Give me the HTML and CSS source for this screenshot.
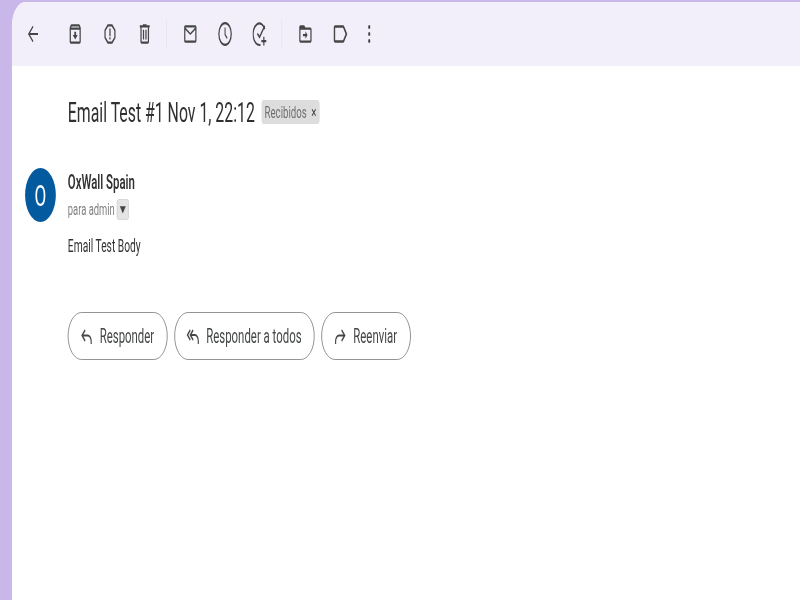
FILE: index.html
```html
<!DOCTYPE html>
<html lang="es">
<head>
<meta charset="utf-8">
<title>Email Test #1</title>
<link rel="stylesheet" href="styles.css">
</head>
<body>
<div class="viewport">
<div class="stage">
  <main class="panel">
    <header class="toolbar">
      <svg class="icon back" viewBox="0 0 24 24"><path d="M20 12H5M12 5l-7 7 7 7" class="line thin"/></svg>
      <div class="group first">
        <svg class="icon" viewBox="0 0 24 24"><path d="M20.54 5.23l-1.39-1.68C18.88 3.21 18.47 3 18 3H6c-.47 0-.88.21-1.16.55L3.46 5.23C3.17 5.57 3 6.02 3 6.5V19c0 1.1.9 2 2 2h14c1.1 0 2-.9 2-2V6.5c0-.48-.17-.93-.46-1.27zM6.24 5h11.52l.81.97H5.44l.8-.97zM5 19V8h14v11H5zm8.45-9h-2.9v3H8l4 4 4-4h-2.55z"/></svg>
        <svg class="icon" viewBox="0 0 24 24"><path d="M15.73 3H8.27L3 8.27v7.46L8.27 21h7.46L21 15.73V8.27L15.73 3zM19 14.9L14.9 19H9.1L5 14.9V9.1L9.1 5h5.8L19 9.1v5.8z"/><path d="M11 7h2v7h-2zM11 15h2v2h-2z"/></svg>
        <svg class="icon" viewBox="0 0 24 24"><path d="M15 4V3H9v1H4v2h1v13c0 1.1.9 2 2 2h10c1.1 0 2-.9 2-2V6h1V4h-5zm2 15H7V6h10v13z"/><path d="M9 8h2v9H9zm4 0h2v9h-2z"/></svg>
      </div>
      <span class="sep"></span>
      <div class="group">
        <svg class="icon" viewBox="0 0 24 24"><path d="M20 4H4c-1.1 0-2 .9-2 2v12c0 1.1.9 2 2 2h16c1.1 0 2-.9 2-2V6c0-1.1-.9-2-2-2zm0 14H4V8l8 5 8-5v10zm-8-7L4 6h16l-8 5z"/></svg>
        <svg class="icon" viewBox="0 0 24 24"><circle cx="12" cy="12" r="10" class="line"/><path d="M12 6V12.500l3.500 3.500" class="line thin"/></svg>
        <svg class="icon" viewBox="0 0 24 24"><path d="M20 7.500A10 10 0 1 0 13 22" class="line"/><path d="M8 11.500l3.500 3.500L20 4.500M14.500 18.500h8M18.500 14.500v8" class="line"/></svg>
      </div>
      <span class="sep"></span>
      <div class="group">
        <svg class="icon" viewBox="0 0 24 24"><path d="M20 6h-8l-2-2H4c-1.100 0-2 .9-2 2v12c0 1.100.9 2 2 2h16c1.100 0 2-.9 2-2V8c0-1.100-.9-2-2-2zm0 12H4V8h16v10z"/><path d="M12 9.500l3.500 3.500-3.500 3.500V14H8v-2h4z"/></svg>
        <svg class="icon large" viewBox="0 0 24 24"><path d="M17.63 5.84C17.27 5.33 16.67 5 16 5L5 5.01C3.9 5.01 3 5.9 3 7v10c0 1.1.9 1.99 2 1.99L16 19c.67 0 1.27-.33 1.63-.84L22 12l-4.37-6.16zM16 17H5V7h11l3.55 5L16 17z"/></svg>
        <svg class="icon more" viewBox="0 0 24 24"><circle cx="12" cy="5.500" r="1.800"/><circle cx="12" cy="12" r="1.800"/><circle cx="12" cy="18.500" r="1.800"/></svg>
      </div>
    </header>

    <div class="subject">
      <h1 class="title">Email Test #1 Nov 1, 22:12</h1>
      <span class="chip">Recibidos<span class="chip-x">×</span></span>
    </div>

    <section class="message">
      <div class="avatar">O</div>
      <div class="meta">
        <div class="sender">OxWall Spain</div>
        <div class="to">para admin<span class="caret"><svg viewBox="0 0 10 10"><path d="M1 2.500h8L5 8z"/></svg></span></div>
        <p class="body-text">Email Test Body</p>
      </div>
    </section>

    <div class="actions">
      <button class="action a-reply" type="button">
        <svg class="a-icon" viewBox="0 0 24 24"><path d="M9.500 6L4 11.500 9.500 17M4 11.500h10a6 6 0 0 1 6 6V20" class="line"/></svg>Responder
      </button>
      <button class="action a-all" type="button">
        <svg class="a-icon" viewBox="0 0 24 24"><path d="M7 6L2 11l5 5M12 6l-5 5 5 5M7 11h8a6 6 0 0 1 6 6v3" class="line"/></svg>Responder a todos
      </button>
      <button class="action a-fwd" type="button">
        <svg class="a-icon" viewBox="0 0 24 24"><path d="M14.500 6L20 11.500 14.500 17M20 11.500H10a6 6 0 0 0-6 6V20" class="line"/></svg>Reenviar
      </button>
    </div>
  </main>
</div>
</div>
</body>
</html>
```
FILE: styles.css
```css
* { box-sizing: border-box; }
html, body {
  margin: 0;
  height: 100%;
  overflow: hidden;
  background: #cab7ea;
}
.viewport {
  width: 800px;
  height: 600px;
  overflow: hidden;
  contain: paint;
}
.stage {
  width: 1404px;
  height: 600px;
  padding: 2px 0 0 21px;
  transform: scaleX(0.5698);
  transform-origin: 0 0;
  filter: blur(0.35px);
  font-family: Roboto, "Liberation Sans", sans-serif;
}
.panel {
  height: 598px;
  background: #fff;
  border-top-left-radius: 24px;
  overflow: hidden;
}
.toolbar {
  height: 64px;
  background: #f2effb;
  display: flex;
  align-items: center;
  padding-left: 24px;
}
.icon {
  width: 26px;
  height: 26px;
  fill: #444746;
  flex: none;
}
.line {
  fill: none;
  stroke: #444746;
  stroke-width: 2;
}
.thin { stroke-width: 1.7; }
.group {
  display: flex;
  align-items: center;
  gap: 35px;
}
.group.first { margin-left: 48px; }
.sep {
  width: 1px;
  height: 30px;
  background: #e2deea;
  margin: 0 28px 0 25px;
}
.icon.large { width: 30px; height: 30px; margin-left: -2px; }
.icon.more { margin-left: -12px; }
.subject {
  display: flex;
  align-items: center;
  height: 40px;
  margin-top: 26px;
  padding-left: 98px;
  gap: 12px;
}
.title {
  margin: 0;
  font-size: 27.8px;
  font-weight: 400;
  color: #303030;
  white-space: nowrap;
}
.chip {
  height: 24px;
  padding: 0 5px;
  display: flex;
  align-items: center;
  background: #dddddd;
  border-radius: 4px;
  font-size: 17px;
  color: #707070;
}
.chip-x { margin-left: 8px; color: #444; }
.message {
  display: flex;
  gap: 21px;
  margin-top: 36px;
  padding-left: 23px;
}
.avatar {
  width: 54px;
  height: 54px;
  border-radius: 50%;
  background: #045a9f;
  color: #fff;
  font-size: 30px;
  display: flex;
  align-items: center;
  justify-content: center;
  flex: none;
}
.meta { display: flex; flex-direction: column; }
.sender {
  height: 24px;
  line-height: 24px;
  margin-top: 2px;
  font-size: 20px;
  font-weight: 600;
  color: #333;
  white-space: nowrap;
}
.to {
  display: flex;
  align-items: center;
  margin-top: 5px;
  height: 21px;
  font-size: 16.5px;
  color: #808080;
  white-space: nowrap;
}
.caret {
  width: 21px;
  height: 21px;
  margin-left: 4px;
  background: #e4e4e4;
  border: 1px solid #cfcfcf;
  border-radius: 3px;
  display: flex;
  align-items: center;
  justify-content: center;
}
.caret svg { width: 13px; height: 13px; fill: #444; }
.body-text {
  margin: 15px 0 0;
  height: 22px;
  line-height: 22px;
  font-size: 18px;
  color: #333;
  white-space: nowrap;
}
.actions {
  display: flex;
  gap: 12px;
  margin-top: 55px;
  padding-left: 98px;
}
.action {
  height: 48px;
  border: 1.5px solid #747775;
  border-radius: 24px;
  background: #fff;
  display: flex;
  align-items: center;
  gap: 11px;
  padding: 0 0 0 20px;
  font: 400 20px Roboto, "Liberation Sans", sans-serif;
  color: #444746;
  white-space: nowrap;
}
.a-reply { width: 175px; }
.a-all { width: 246px; }
.a-fwd { width: 157px; }
.a-icon { width: 24px; height: 24px; flex: none; }
```
